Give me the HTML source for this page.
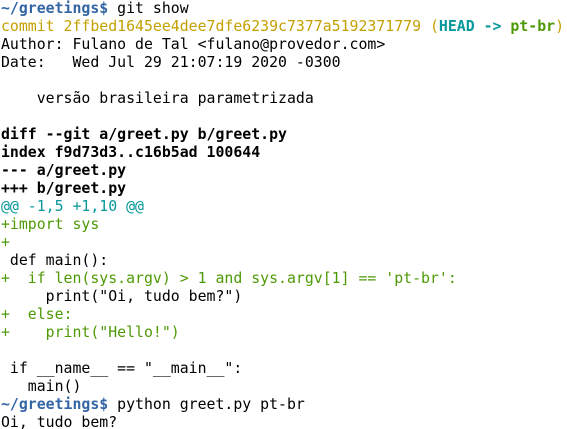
<!DOCTYPE html>
<html><head><meta charset="utf-8"><style>
html,body{margin:0;padding:0;background:#fff;width:567px;height:429px;overflow:hidden}
pre{margin:0;padding:0 0 0 1px;position:relative;top:-1px;font-family:"DejaVu Sans Mono","Liberation Mono",monospace;font-size:14.85px;line-height:18px;color:#000;white-space:pre}
.p{color:#3465a4;font-weight:bold}.y{color:#c4a000}.c{color:#06989a}.g{color:#4e9a06}.b{font-weight:bold}
</style></head><body><pre><span class="p">~/greetings$</span> git show
<span class="y">commit 2ffbed1645ee4dee7dfe6239c7377a5192371779 (<span class="c b">HEAD -&gt; </span><span class="g b">pt-br</span>)</span>
Author: Fulano de Tal &lt;fulano@provedor.com&gt;
Date:   Wed Jul 29 21:07:19 2020 -0300

    versão brasileira parametrizada

<span class="b">diff --git a/greet.py b/greet.py</span>
<span class="b">index f9d73d3..c16b5ad 100644</span>
<span class="b">--- a/greet.py</span>
<span class="b">+++ b/greet.py</span>
<span class="c">@@ -1,5 +1,10 @@</span>
<span class="g">+import sys</span>
<span class="g">+</span>
 def main():
<span class="g">+  if len(sys.argv) &gt; 1 and sys.argv[1] == 'pt-br':</span>
     print("Oi, tudo bem?")
<span class="g">+  else:</span>
<span class="g">+    print("Hello!")</span>

 if __name__ == "__main__":
   main()
<span class="p">~/greetings$</span> python greet.py pt-br
Oi, tudo bem?
</pre></body></html>
